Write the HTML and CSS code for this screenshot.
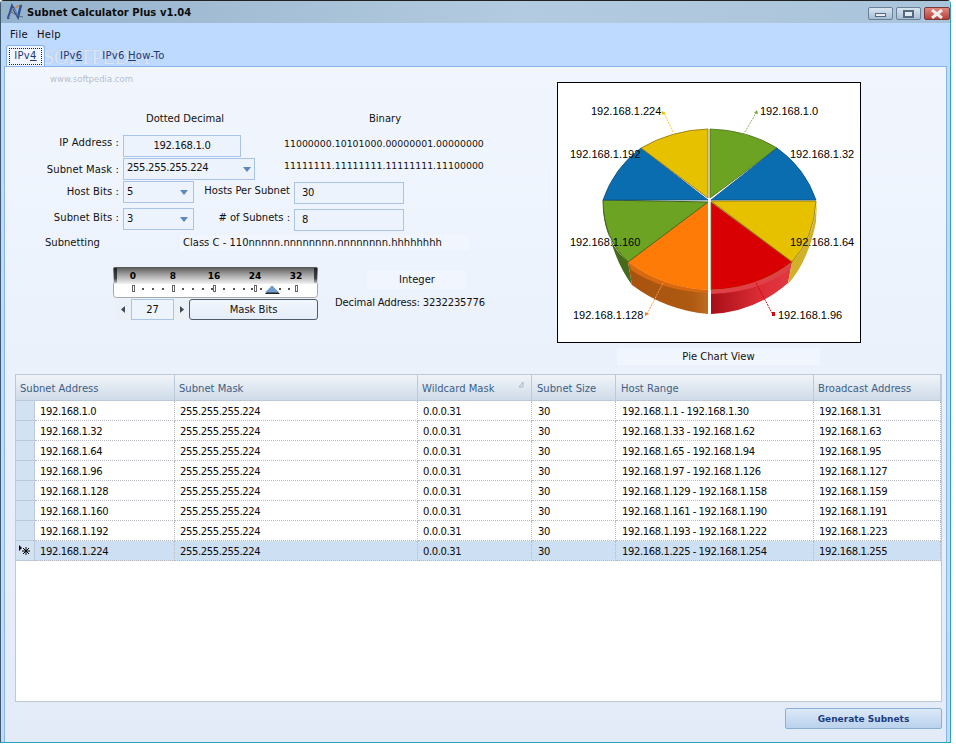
FILE: index.html
```html
<!DOCTYPE html>
<html lang="en">
<head>
<meta charset="utf-8">
<title>Subnet Calculator Plus v1.04</title>
<link rel="stylesheet" href="styles.css">
</head>
<body>
<div class="window">
  <header class="titlebar">
    <svg class="app-icon" width="18" height="18" viewBox="0 0 18 18"><path d="M1 14 Q8 3 16 2" fill="none" stroke="#c9803c" stroke-width="1.3"/><path d="M2 16 L6 3 L12 14 L15 2" fill="none" stroke="#2c4f9a" stroke-width="2.4"/><path d="M3 15 L7 5 L12 12" fill="none" stroke="#8ea6cf" stroke-width=".8"/><path d="M4 8 Q12 14 17 14" fill="none" stroke="#59636f" stroke-width="1"/></svg>
    <span class="title">Subnet Calculator Plus v1.04</span>
    <div class="controls">
      <span class="ctl"><i class="min"></i></span>
      <span class="ctl"><i class="max"></i></span>
      <span class="ctl close"><svg width="16" height="10" viewBox="0 0 16 10"><path d="M3 1 L13 9 M13 1 L3 9" stroke="#eee" stroke-width="3"/></svg></span>
    </div>
  </header>
  <nav class="menubar"><span>File</span><span>Help</span></nav>
  <div class="tabs">
    <span class="tab active"><b>IPv<u>4</u></b></span>
    <span class="tab">IPv<u>6</u></span>
    <span class="tab">IPv6 <u>H</u>ow-To</span>
  </div>
  <main class="panel">
    <div class="watermark"><span class="wm-big">SOFTPEDIA</span><span class="wm-small">www.softpedia.com</span></div>
    <section class="top">
      <div class="form">
        <div class="row heads"><span class="h-dotted">Dotted Decimal</span><span class="h-binary">Binary</span></div>
        <div class="row r-ip">
          <label class="lbl">IP Address :</label>
          <div class="field ip">192.168.1.0</div>
          <span class="bin">11000000.10101000.00000001.00000000</span>
        </div>
        <div class="row r-mask">
          <label class="lbl">Subnet Mask :</label>
          <div class="field combo wide">255.255.255.224<i></i></div>
          <span class="bin up">11111111.11111111.11111111.11100000</span>
        </div>
        <div class="row r-host">
          <label class="lbl">Host Bits :</label>
          <div class="field combo small">5<i></i></div>
          <label class="lbl2">Hosts Per Subnet</label>
          <div class="field num">30</div>
        </div>
        <div class="row r-sub">
          <label class="lbl">Subnet Bits :</label>
          <div class="field combo small">3<i></i></div>
          <label class="lbl2">#&nbsp;of Subnets :</label>
          <div class="field num">8</div>
        </div>
        <div class="row r-class">
          <span class="subnetting">Subnetting</span>
          <span class="classc">Class C - 110nnnnn.nnnnnnnn.nnnnnnnn.hhhhhhhh</span>
        </div>
        <div class="lower">
          <div class="slider-wrap">
            <svg class="ruler" width="205" height="31" viewBox="113 267 205 31">
              <defs>
                <linearGradient id="rg" x1="0" y1="0" x2="0" y2="1"><stop offset="0" stop-color="#555"/><stop offset=".4" stop-color="#9a9a9a"/><stop offset="1" stop-color="#f2f2f2"/></linearGradient>
                <linearGradient id="re" x1="0" y1="0" x2="0" y2="1"><stop offset="0" stop-color="#222"/><stop offset=".7" stop-color="#444"/><stop offset="1" stop-color="#bbb"/></linearGradient>
              </defs>
              <rect x="113.5" y="267.5" width="204" height="30" rx="3" fill="#fff" stroke="#a8a8a8"/>
              <rect x="113" y="267" width="205" height="17" rx="2" fill="url(#rg)"/>
              <rect x="114" y="268" width="3" height="15" fill="url(#re)"/>
              <rect x="314" y="268" width="3" height="15" fill="url(#re)"/>
              <g class="rnum">
                <text x="133" y="279">0</text><text x="173" y="279">8</text><text x="214" y="279">16</text><text x="255" y="279">24</text><text x="296" y="279">32</text>
              </g>
              <g fill="#fff" stroke="#666">
                <rect x="132.5" y="285.5" width="2" height="6"/><rect x="172.5" y="285.5" width="2" height="6"/><rect x="213.5" y="285.5" width="2" height="6"/><rect x="254.5" y="285.5" width="2" height="6"/><rect x="295.5" y="285.5" width="2" height="6"/>
              </g>
              <g fill="#555">
                <rect x="142" y="288" width="2" height="2"/><rect x="152" y="288" width="2" height="2"/><rect x="162" y="288" width="2" height="2"/>
                <rect x="182" y="288" width="2" height="2"/><rect x="192" y="288" width="2" height="2"/><rect x="202" y="288" width="2" height="2"/><rect x="211" y="288" width="2" height="2"/>
                <rect x="223" y="288" width="2" height="2"/><rect x="233" y="288" width="2" height="2"/><rect x="243" y="288" width="2" height="2"/><rect x="251" y="288" width="2" height="2"/>
                <rect x="260" y="288" width="2" height="2"/><rect x="279" y="288" width="2" height="2"/><rect x="288" y="288" width="2" height="2"/>
              </g>
              <path d="M265 294 L272 286 L280 294 Z" fill="#222"/>
              <path d="M265 292.5 L272 285.5 L279 292.5 Z" fill="#6f9dcc"/>
            </svg>
            <div class="spin">
              <span class="arrow"><svg width="5" height="7" viewBox="0 0 5 7"><path d="M4 0 V7 L0 3.5 Z" fill="#404a55"/></svg></span>
              <span class="spin-val">27</span>
              <span class="arrow"><svg width="5" height="7" viewBox="0 0 5 7"><path d="M1 0 V7 L5 3.5 Z" fill="#404a55"/></svg></span>
              <span class="maskbtn">Mask Bits</span>
            </div>
          </div>
          <div class="int">
            <span class="int-head">Integer</span>
            <span class="int-val">Decimal Address: 3232235776</span>
          </div>
        </div>
      </div>
      <figure class="chart">
        <svg class="pie" width="304" height="261" viewBox="557 82 304 261">
          <defs>
            <linearGradient id="redside" x1="0" x2="1" y1="0" y2="0"><stop offset="0" stop-color="#a80f16"/><stop offset=".6" stop-color="#dc2c36"/><stop offset="1" stop-color="#e23a42"/></linearGradient>
            <linearGradient id="orside" x1="0" x2="1" y1="0" y2="0"><stop offset="0" stop-color="#a8520f"/><stop offset=".8" stop-color="#ae5a12"/><stop offset="1" stop-color="#c06c20"/></linearGradient>
          </defs>
          <rect x="557.5" y="82.5" width="303" height="260" fill="#fff" stroke="#000"/>
          <path d="M603 200 Q602 240 628 262 L632 285 Q610 255 603 205 Z" fill="#466a1c"/>
          <path d="M628 262 Q662 288 708 290 L708 314 Q665 310 632 285 Z" fill="url(#orside)"/>
          <path d="M711 290 Q760 288 792 262 L788 283 Q755 312 711 314 Z" fill="url(#redside)"/>
          <path d="M792 262 Q814 240 817 200 L816 222 Q808 262 788 284 Z" fill="#d2b02a"/>
          <path d="M710 198 L710 129 Q748 130 777 148 Z" fill="#6ca323" stroke="#4c6e1a" stroke-width=".8"/>
          <path d="M711 200 L777 148 Q805 168 816 200 Z" fill="#0a6db0" stroke="#0c4f80" stroke-width=".8"/>
          <path d="M711 201 L816 201 Q814 238 792 262 Z" fill="#e6c100" stroke="#8a7410" stroke-width=".8"/>
          <path d="M711 202 L792 262 Q758 289 711 290 Z" fill="#d90004" stroke="#8c6c08" stroke-width=".8"/>
          <path d="M708 202 L708 290 Q662 288 628 262 Z" fill="#fe7b08"/>
          <path d="M708 202 L628 262 Q603 238 603 200 Z" fill="#6ca323" stroke="#44621a" stroke-width="1"/>
          <path d="M708 200 L603 200 Q614 168 641 148 Z" fill="#0a6db0" stroke="#0c4f80" stroke-width=".8"/>
          <path d="M708 198 L641 148 Q672 130 708 129 Z" fill="#e6c100" stroke="#8a7410" stroke-width=".8"/>
          <path d="M628 262 Q662 288 708 290 L708 293 Q662 291 631 270 Z" fill="#d8690e"/>
          <path d="M711 290 Q760 288 792 262 L790 269 Q760 292 711 294 Z" fill="#e04048"/>
          <path d="M745 132 L756 113" stroke="#8db45c" stroke-dasharray="2 1"/><path d="M757 110 L758 114 L754 113 Z" fill="#79a63c"/>
          <path d="M673 132 L664 113" stroke="#f0cc30" stroke-dasharray="2 1"/><path d="M662 111 L666 113 L662 115 Z" fill="#e6c100"/>
          <path d="M663 283 L647 314" stroke="#f59a4a" stroke-dasharray="2 1"/><path d="M645 316 L645 312 L649 314 Z" fill="#fe7b08"/>
          <path d="M756 283 L772 313" stroke="#d90004" stroke-dasharray="2 1"/><rect x="772" y="312" width="3" height="4" fill="#d90004"/>
          <g class="plabel">
            <text x="591" y="115">192.168.1.224</text><text x="760" y="115">192.168.1.0</text>
            <text x="570" y="158">192.168.1.192</text><text x="790" y="158">192.168.1.32</text>
            <text x="570" y="246">192.168.1.160</text><text x="790" y="246">192.168.1.64</text>
            <text x="573" y="319">192.168.1.128</text><text x="778" y="319">192.168.1.96</text>
          </g>
        </svg>
        <figcaption>Pie Chart View</figcaption>
      </figure>
    </section>
    <section class="gridbox">
      <table class="grid">
        <colgroup><col class="c0"><col class="c1"><col class="c2"><col class="c3"><col class="c4"><col class="c5"><col class="c6"></colgroup>
        <thead><tr><th colspan="2">Subnet Address</th><th>Subnet Mask</th><th class="sorted">Wildcard Mask<svg class="sort" width="6" height="7" viewBox="0 0 6 7"><path d="M5 1 L1 6 H5 Z" fill="none" stroke="#aab4c2"/></svg></th><th>Subnet Size</th><th>Host Range</th><th>Broadcast Address</th></tr></thead>
        <tbody>
          <tr><td class="rh"></td><td>192.168.1.0</td><td>255.255.255.224</td><td>0.0.0.31</td><td>30</td><td>192.168.1.1 - 192.168.1.30</td><td>192.168.1.31</td></tr>
          <tr><td class="rh"></td><td>192.168.1.32</td><td>255.255.255.224</td><td>0.0.0.31</td><td>30</td><td>192.168.1.33 - 192.168.1.62</td><td>192.168.1.63</td></tr>
          <tr><td class="rh"></td><td>192.168.1.64</td><td>255.255.255.224</td><td>0.0.0.31</td><td>30</td><td>192.168.1.65 - 192.168.1.94</td><td>192.168.1.95</td></tr>
          <tr><td class="rh"></td><td>192.168.1.96</td><td>255.255.255.224</td><td>0.0.0.31</td><td>30</td><td>192.168.1.97 - 192.168.1.126</td><td>192.168.1.127</td></tr>
          <tr><td class="rh"></td><td>192.168.1.128</td><td>255.255.255.224</td><td>0.0.0.31</td><td>30</td><td>192.168.1.129 - 192.168.1.158</td><td>192.168.1.159</td></tr>
          <tr><td class="rh"></td><td>192.168.1.160</td><td>255.255.255.224</td><td>0.0.0.31</td><td>30</td><td>192.168.1.161 - 192.168.1.190</td><td>192.168.1.191</td></tr>
          <tr><td class="rh"></td><td>192.168.1.192</td><td>255.255.255.224</td><td>0.0.0.31</td><td>30</td><td>192.168.1.193 - 192.168.1.222</td><td>192.168.1.223</td></tr>
          <tr class="sel"><td class="rh"><svg width="14" height="12" viewBox="0 0 14 12"><path d="M1 0 V6 L4 3 Z" fill="#000"/><path d="M8 2 V10 M4 6 H12 M5 3 L11 9 M11 3 L5 9" stroke="#000" stroke-width="1"/></svg></td><td>192.168.1.224</td><td>255.255.255.224</td><td>0.0.0.31</td><td>30</td><td>192.168.1.225 - 192.168.1.254</td><td>192.168.1.255</td></tr>
        </tbody>
      </table>
    </section>
    <footer class="foot"><button class="gen" type="button">Generate Subnets</button></footer>
  </main>
</div>
</body>
</html>
```
FILE: styles.css
```css
* { box-sizing: border-box; }
html, body { margin: 0; padding: 0; background: #fff; }
body { width: 956px; height: 745px; overflow: hidden; font-family: "DejaVu Sans", sans-serif; font-size: 10px; color: #111; }
.window { width: 951px; height: 743px; background: #bedaff; border: 1px solid #3f5a70; border-top-color: #222; border-bottom-color: #2aa5b5; border-right-color: #2aa5b5; border-radius: 4px 4px 0 0; display: flex; flex-direction: column; }
.titlebar { height: 22px; flex: none; display: flex; align-items: center; padding: 0 0 0 5px; background: linear-gradient(90deg, #95b2cb 0%, #b3cbe0 55%, #a9c3da 100%); }
.app-icon { flex: none; }
.title { margin-left: 3px; font-weight: bold; font-size: 10px; letter-spacing: .05px; color: #0c0c0c; }
.controls { margin-left: auto; display: flex; gap: 3px; padding-top: 3px; }
.ctl { width: 25px; height: 13px; border: 1px solid #6b7f95; border-radius: 2px; background: linear-gradient(#d9e5f0, #a5bdd4); display: flex; align-items: center; justify-content: center; }
.ctl.close { width: 26px; background: linear-gradient(#e08a80, #b83e36); border-color: #7a3a3a; }
.ctl .min { width: 11px; height: 4px; background: #e9edf2; border: 1px solid #56697f; margin-top: 2px; }
.ctl .max { width: 11px; height: 8px; border: 2px solid #56697f; background: #dfe7ef; }
.menubar { height: 21px; flex: none; display: flex; gap: 9px; padding: 5px 0 0 9px; font-size: 10px; line-height: 14px; letter-spacing: .3px; color: #111; }
.tabs { height: 22px; flex: none; display: flex; align-items: flex-end; padding-left: 5px; color: #1c3a78; letter-spacing: .25px; position: relative; z-index: 1; }
.tab { height: 21px; padding: 4px 5px 0; margin-right: 10px; line-height: 14px; white-space: nowrap; }
.tab.active { width: 39px; margin-right: 10px; padding: 2px; background: #f1f6fe; border: 1px solid #8ab4e8; border-bottom: 0; border-radius: 3px 3px 0 0; }
.tab.active b { display: block; font-weight: normal; height: 17px; text-align: center; line-height: 14px; border: 1px dotted #222; }
.panel { flex: 1; margin: 0 3px 0 3px; position: relative; background: linear-gradient(#f1f6fe, #e3ebf8); border-top: 1px solid #8ab4e8; border-left: 1px solid #8ab4e8; border-right: 1px solid #8ab4e8; display: flex; flex-direction: column; padding: 15px 4px 0 10px; }
.watermark { position: absolute; left: 38px; top: -22px; display: flex; flex-direction: column; color: rgba(240, 245, 252, .7); pointer-events: none; }
.wm-big { font-family: "Liberation Serif", serif; font-size: 20px; line-height: 24px; letter-spacing: -.1px; text-shadow: 0 0 1px rgba(150, 160, 180, .5); }
.wm-small { font-size: 8.5px; margin: 5px 0 0 7px; color: rgba(150, 155, 170, .65); }
.top { display: flex; height: 292px; flex: none; }
.form { width: 542px; flex: none; display: flex; flex-direction: column; }
.row { display: flex; align-items: flex-start; white-space: nowrap; }
.heads { height: 53px; padding-top: 31px; }
.h-dotted { width: 80px; margin-left: 130px; text-align: center; }
.h-binary { width: 60px; margin-left: 130px; text-align: center; }
.lbl { width: 104px; flex: none; text-align: right; padding-top: 3px; margin-right: 4px; letter-spacing: .1px; }
.r-ip .lbl { padding-top: 2px; }
.r-mask .lbl { padding-top: 6px; }
.r-host .lbl { padding-top: 5px; }
.r-sub .lbl { padding-top: 4px; }
.field { background: #edf3fd; border: 1px solid #a9c4e4; height: 22px; line-height: 20px; padding: 0 3px; position: relative; flex: none; letter-spacing: -.3px; }
.ip { width: 118px; text-align: center; margin-right: 43px; }
.bin { font-size: 9.4px; padding-top: 3px; }
.bin.up { padding-top: 2px; }
.r-ip { height: 23px; }
.r-mask { height: 23px; }
.r-host { height: 27px; }
.r-sub { height: 27px; }
.combo { line-height: 18px; }
.small { line-height: 20px; }
.combo i { position: absolute; right: 3px; top: 8px; width: 0; height: 0; border: 4px solid transparent; border-top: 5px solid #5d86b8; border-bottom: 0; }
.small i { right: 5px; }
.wide { width: 132px; margin-right: 29px; }
.small { width: 71px; }
.lbl2 { width: 96px; flex: none; text-align: right; padding-top: 4px; margin-right: 4px; }
.num { width: 110px; padding-left: 7px; margin-top: 1px; }
.r-class { height: 32px; padding-top: 2px; }
.subnetting { width: 165px; padding-left: 30px; flex: none; }
.classc { background: #f1f6fe; padding: 0 27px 0 3px; line-height: 15px; margin-top: -2px; }
.lower { display: flex; }
.slider-wrap { margin-left: 98px; width: 205px; flex: none; }
.ruler { display: block; }
.rnum text { font-family: "DejaVu Sans", sans-serif; font-size: 9px; font-weight: bold; fill: #000; text-anchor: middle; }
.spin { display: flex; height: 21px; margin-top: 1px; padding-left: 2px; }
.arrow { width: 16px; background: #ecf1f8; display: flex; align-items: center; justify-content: center; }
.spin-val { width: 43px; border: 1px solid #a9c4e4; background: #eef4fc; text-align: center; line-height: 19px; }
.spin .arrow:nth-of-type(3) { width: 15px; }
.maskbtn { flex: 1; border: 1px solid #4c5a6a; border-radius: 3px; background: linear-gradient(#f1f6fd, #e5edf9); text-align: center; line-height: 19px; }
.int { margin-left: 17px; width: 150px; display: flex; flex-direction: column; align-items: center; padding-top: 4px; white-space: nowrap; }
.int-head { width: 100px; height: 18px; line-height: 18px; text-align: center; background: #f1f6fe; margin-left: 14px; }
.int-val { margin-top: 8px; letter-spacing: -.15px; }
.chart { margin: 0; width: 304px; flex: none; }
.pie { display: block; }
.plabel text { font-family: "Liberation Sans", sans-serif; font-size: 11px; fill: #000; }
figcaption { width: 203px; height: 17px; margin: 5px 0 0 60px; background: #f1f6fe; text-align: center; line-height: 17px; }
.gridbox { width: 927px; height: 328px; flex: none; background: #fff; border: 1px solid #bcc9d9; }
.grid { border-collapse: separate; border-spacing: 0; table-layout: fixed; width: 925px; }
.c0 { width: 19px; } .c1 { width: 140px; } .c2 { width: 243px; } .c3 { width: 114px; } .c4 { width: 84px; } .c5 { width: 198px; } .c6 { width: 127px; }
.grid th { height: 26px; padding: 2px 4px 0; text-align: left; font-weight: normal; color: #3e5f87; background: linear-gradient(#f0f4f9, #cfdbe8); border-right: 1px solid #bcc9d9; border-bottom: 1px solid #bcc9d9; position: relative; }
.grid th:nth-child(4), .grid th:nth-child(5) { padding-left: 5px; }
.sort { position: absolute; right: 7px; top: 6px; }
.grid td { height: 20px; padding: 1px 5px 0; border-right: 1px dotted #b8bcc2; border-bottom: 1px dotted #b8bcc2; white-space: nowrap; overflow: hidden; color: #0a0a0a; letter-spacing: -.38px; word-spacing: -.3px; }
.grid td:nth-child(5), .grid td:nth-child(6) { padding-left: 6px; }
.grid td.rh { background: #d2e2f2; padding: 0; border-right: 1px solid #bcc9d9; border-bottom: 1px solid #bcc9d9; }
.rh svg { display: block; margin-left: 2px; }
.sel td { background: #cddff3; }
.foot { flex: 1; display: flex; justify-content: flex-end; align-items: flex-start; padding: 6px 0 0; }
.gen { width: 157px; height: 21px; padding: 0; border: 1px solid #8bb0d8; border-radius: 2px; background: linear-gradient(#dce9f8, #bad2ec); font-family: "DejaVu Sans", sans-serif; font-size: 9px; font-weight: bold; color: #1b3d80; }
```
